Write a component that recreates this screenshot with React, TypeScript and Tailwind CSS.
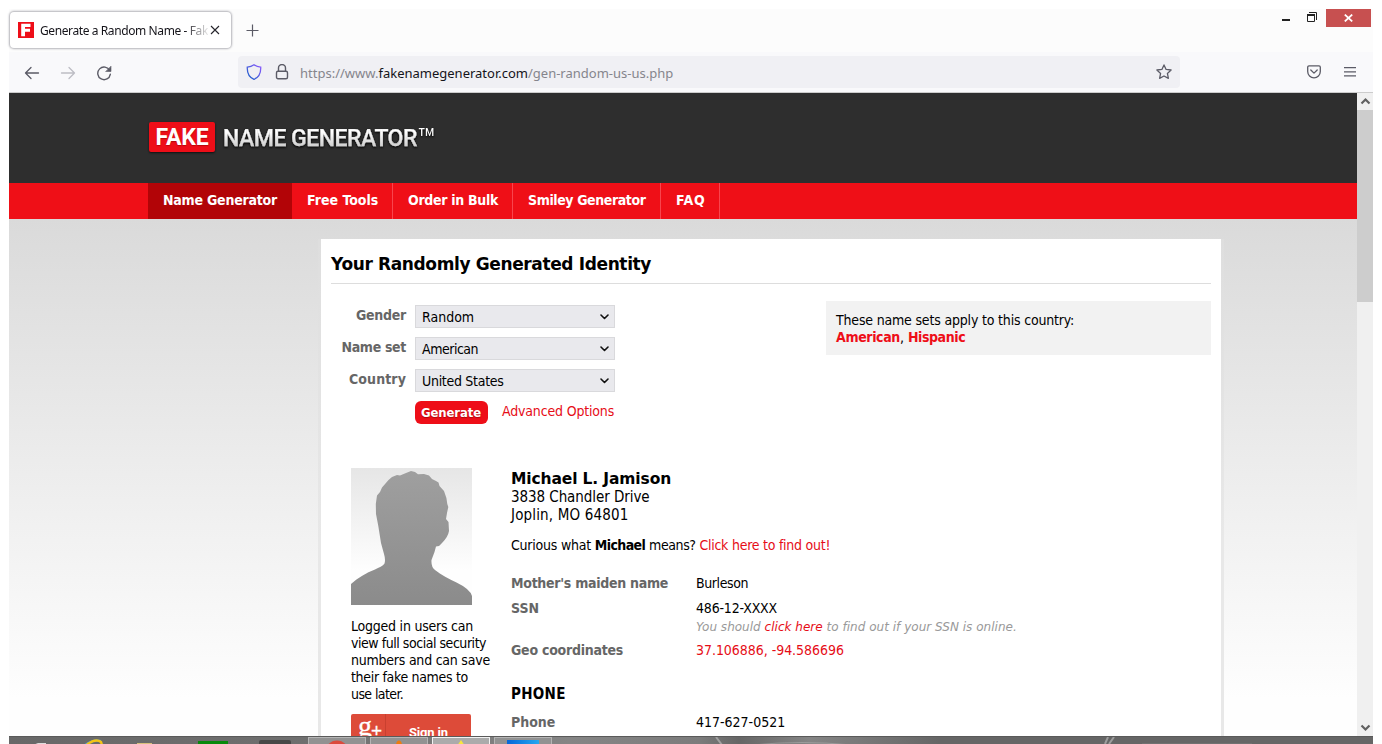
import type { ReactNode } from "react";

const nav = [
  { label: "Name Generator", cls: "w-[144px] bg-[#b20407] pl-[15px] tracking-[-0.22px]" },
  { label: "Free Tools", cls: "w-[101px] border-r border-[#f8454d] pl-[15px]" },
  { label: "Order in Bulk", cls: "w-[120px] border-r border-[#f8454d] pl-[15px] tracking-[-0.3px]" },
  { label: "Smiley Generator", cls: "w-[148px] border-r border-[#f8454d] pl-[15px] tracking-[-0.4px]" },
  { label: "FAQ", cls: "w-[59px] border-r border-[#f8454d] pl-[15px] tracking-[0.6px]" },
];

const fields = [
  { label: "Gender", labelCls: "tracking-[-0.25px]", value: "Random", valueCls: "" },
  { label: "Name set", labelCls: "tracking-[-0.33px]", value: "American", valueCls: "tracking-[-0.48px]" },
  { label: "Country", labelCls: "tracking-[0.1px]", value: "United States", valueCls: "tracking-[-0.29px]" },
];

function TitleBar() {
  return (
    <div className="flex h-[43px] bg-[#fcfcfc] pl-px">
      <div className="mt-[3px] flex h-[36px] w-[221px] items-center rounded-[4px] bg-white pl-[8px] shadow-[0_0_2px_1px_rgba(90,90,105,0.45)]">
        <svg className="size-4 shrink-0" viewBox="0 0 16 16">
          <rect width="16" height="16" fill="#ee0e18" />
          <path d="M3.2 1.8h9.3v3.2H7v1.8h5v3H7v4.5H3.2z" fill="#fff" />
        </svg>
        <div className="ml-[6px] w-[168px] overflow-hidden whitespace-nowrap bg-[linear-gradient(90deg,#15141a_144px,#15141a11_169px)] bg-clip-text pt-[2px] font-['Noto_Sans',sans-serif] text-[12px] tracking-[-0.4px] text-transparent">
          Generate a Random Name - Fake
        </div>
        <svg className="ml-[2px] size-[10px]" viewBox="0 0 10 10" fill="none" stroke="#25242b" strokeWidth="1.1">
          <path d="M1 1l8 8M9 1L1 9" />
        </svg>
      </div>
      <svg className="ml-[15px] mt-[15px] size-[13px]" viewBox="0 0 13 13" fill="none" stroke="#5b5b66" strokeWidth="1.2">
        <path d="M6.5 .5v12M.5 6.5h12" />
      </svg>
      <div className="ml-auto flex">
        <svg className="mr-[8px] h-[18px] w-[36px]" viewBox="0 0 36 18" fill="none" stroke="#222">
          <path d="M0 11h8" strokeWidth="2" />
          <path d="M25.5 6v6.500h7v-6.500z" strokeWidth="1" />
          <path d="M25 6h8" strokeWidth="2" />
          <path d="M27 3.500h7.500v7.500" strokeWidth="1" />
        </svg>
        <div className="mr-[2px] flex h-[18px] w-[45px] items-center justify-center bg-[#c75050]">
          <svg className="h-[8px] w-[9px]" viewBox="0 0 9 8" fill="none" stroke="#fff" strokeWidth="1.8">
            <path d="M.8.6l7.400 6.800M8.200.6L.8 7.400" />
          </svg>
        </div>
      </div>
    </div>
  );
}

function Toolbar() {
  return (
    <div className="flex h-[41px] items-center border-b border-[#cccccc] bg-[#f9f9fb]">
      <svg className="ml-[15px] mt-px h-[16px] w-[90px]" viewBox="0 0 90 16" fill="none" strokeWidth="1.3" strokeLinecap="round" strokeLinejoin="round">
        <path d="M14.500 8H1.500M7 2.500L1.500 8 7 13.500" stroke="#5b5b66" />
        <path d="M37.500 8h13M45 2.500L50.500 8 45 13.500" stroke="#bdbdc4" />
        <path d="M85.700 5.500A6.300 6.300 0 1 0 86.300 9.300" stroke="#5b5b66" strokeWidth="1.4" />
        <path d="M87 1.500v5h-5z" fill="#5b5b66" stroke="#5b5b66" strokeWidth=".6" />
      </svg>
      <div className="ml-[124px] flex h-[32px] w-[942px] items-center rounded-[4px] bg-[#f0f0f4] pl-[8px] pr-[8px]">
        <svg className="size-4" viewBox="0 0 16 16" fill="none" strokeWidth="1.3">
          <defs>
            <linearGradient id="shield" x1="0" y1="1" x2="1" y2="0">
              <stop offset="0.2" stopColor="#2c5fd0" />
              <stop offset="1" stopColor="#9059ff" />
            </linearGradient>
          </defs>
          <path d="M8 .8C6 2.200 3.800 2.900 1.300 3.100 1 9 3.200 13.300 8 15.300 12.800 13.300 15 9 14.700 3.100 12.200 2.900 10 2.200 8 .8z" stroke="url(#shield)" />
        </svg>
        <svg className="ml-[13px] h-[16px] w-[14px]" viewBox="0 0 14 16" fill="none" stroke="#5b5b66" strokeWidth="1.4">
          <rect x="1.500" y="7.200" width="11" height="7.600" rx="1.500" />
          <path d="M3.500 7V4a3.500 3.500 0 0 1 7 0v3" />
        </svg>
        <div className="ml-[11px] mt-[2px] whitespace-nowrap font-['Noto_Sans',sans-serif] text-[13px] leading-[18px] text-[#85858c]">
          https://www.<span className="text-[#15141a]">fakenamegenerator.com</span>/gen-random-us-us.php
        </div>
        <svg className="ml-auto size-4" viewBox="0 0 16 16" fill="none" stroke="#5b5b66" strokeWidth="1.300" strokeLinejoin="round">
          <path d="M8 .9l2.100 4.500 5 .6-3.700 3.400 1 4.900L8 12l-4.400 2.300 1-4.900L.9 6l5-.6z" />
        </svg>
      </div>
      <svg className="ml-auto h-[14px] w-[14px]" viewBox="0 0 14 14" fill="none" stroke="#5b5b66" strokeWidth="1.300" strokeLinecap="round" strokeLinejoin="round">
        <path d="M2 .9h10a1.300 1.300 0 0 1 1.300 1.300v4.300a6.300 6.300 0 0 1-12.600 0V2.200A1.300 1.300 0 0 1 2 .9z" />
        <path d="M3.800 5L7 8.100 10.200 5" />
      </svg>
      <svg className="ml-[23px] mr-[17px] h-[10px] w-[12px]" viewBox="0 0 12 10" stroke="#5b5b66" strokeWidth="1.200">
        <path d="M0 .7h12M0 4.800h12M0 8.900h12" />
      </svg>
    </div>
  );
}

function Avatar() {
  return (
    <svg className="block h-[137px] w-[121px]" viewBox="0 0 121 137">
      <defs>
        <linearGradient id="avatarBg" x1="0" y1="0" x2="0" y2="1">
          <stop offset="0" stopColor="#e6e6e6" />
          <stop offset="0.75" stopColor="#fefefe" />
        </linearGradient>
        <linearGradient id="avatarFg" x1="0" y1="0" x2="0" y2="1">
          <stop offset="0" stopColor="#9f9f9f" />
          <stop offset="1" stopColor="#8b8b8b" />
        </linearGradient>
      </defs>
      <rect width="121" height="137" fill="url(#avatarBg)" />
      <path
        fill="url(#avatarFg)"
        d="M0 116C7 109.500 15 105 24 101.500 28 99.500 32 98 33.500 95.500 34.400 93 34 89 33 86L30 75 27.300 58 25 46 24.800 36 26 27.500 29 24 31 19.500 37.500 12 41 9 46 7 49 7.500 55 5 60 3 64 4 67 6.200 73 6 78 7.500 81 11 85 13 87.500 14.500 88.500 18 93 23Q96 30 96.300 36L97.300 39 96 45 95 51 97.500 54 98 63Q97 69 91 75L88 78 85 78.500 83.500 84 80.500 92Q80 99 84 102C90 107 98 111 105.500 114.500Q119 121 121 128V137H0z"
      />
    </svg>
  );
}

function Row({ label, labelCls, className, children }: { label: string; labelCls: string; className: string; children: ReactNode }) {
  return (
    <div className={"flex leading-[17px] " + className}>
      <div className={"w-[185px] font-bold text-[#666] " + labelCls}>{label}</div>
      <div>{children}</div>
    </div>
  );
}

function Profile() {
  return (
    <div className="flex pl-[20px]">
      <div className="w-[160px] shrink-0">
        <Avatar />
        <div className="mt-[13px] whitespace-nowrap leading-[17px]">
          <div className="tracking-[-0.23px]">Logged in users can</div>
          <div className="tracking-[-0.46px]">view full social security</div>
          <div className="tracking-[-0.23px]">numbers and can save</div>
          <div className="tracking-[-0.32px]">their fake names to</div>
          <div className="tracking-[-0.6px]">use later.</div>
        </div>
        <div className="mt-[11px] flex h-[34px] w-[120px] rounded-[2px] bg-[#dd4b39] text-white">
          <div className="flex w-[35px] border-r border-[#c9402f] pl-[7px] font-['Liberation_Serif',serif] text-[28px] leading-[24px] tracking-[-1px] [-webkit-text-stroke:0.3px_white]">
            g<span className="font-['Liberation_Sans',sans-serif] text-[19px] leading-[33px]">+</span>
          </div>
          <div className="pl-[23px] font-['Roboto',sans-serif] text-[13px] font-bold leading-[37px] tracking-[-0.2px]">Sign in</div>
        </div>
      </div>
      <div className="whitespace-nowrap pt-px">
        <div className="pt-px font-['DejaVu_Sans',sans-serif] text-[15.5px] font-bold leading-[18px] tracking-[-0.13px]">Michael L. Jamison</div>
        <div className="text-[15px] leading-[18px] tracking-[-0.07px]">3838 Chandler Drive</div>
        <div className="text-[15px] leading-[18px] tracking-[0.16px]">Joplin, MO 64801</div>
        <div className="mt-[13px] leading-[17px] tracking-[-0.22px]">
          Curious what <b className="tracking-[-0.6px]">Michael</b> <span className="tracking-[-0.4px]">means?</span>{" "}
          <a className="tracking-[-0.25px] text-[#e60d17]">Click here to find out!</a>
        </div>
        <Row label="Mother's maiden name" labelCls="tracking-[-0.28px]" className="mt-[21px] h-[25px]">
          <span className="tracking-[-0.4px]">Burleson</span>
        </Row>
        <Row label="SSN" labelCls="" className="h-[42px]">
          <div className="tracking-[-0.18px]">486-12-XXXX</div>
          <div className="mt-[2px] font-['DejaVu_Sans',sans-serif] text-[12px] italic tracking-[0.02px] text-[#999]">
            You should <a className="text-[#e60d17]">click here</a> to find out if your SSN is online.
          </div>
        </Row>
        <Row label="Geo coordinates" labelCls="tracking-[-0.25px]" className="h-[44px]">
          <a className="tracking-[-0.04px] text-[#e60d17]">37.106886, -94.586696</a>
        </Row>
        <div className="text-[15px] font-bold leading-[17px] tracking-[0.3px]">PHONE</div>
        <Row label="Phone" labelCls="" className="mt-[11px]">
          417-627-0521
        </Row>
      </div>
    </div>
  );
}

function Taskbar() {
  return (
    <div className="flex h-[8px] overflow-hidden border-t border-[#5a5a5a] bg-[linear-gradient(90deg,#686868_0px,#6f6f6f_300px,#858585_560px,#7c7c7c_690px,#666_730px,#858585_800px,#777_860px,#666_930px)]">
      <svg className="h-[8px] w-[299px] shrink-0" viewBox="0 0 299 8" fill="none">
        <path d="M24 8l5-2h8v2z" fill="#ddd" />
        <path d="M76 8q8-6 16-4" stroke="#4aa3da" strokeWidth="2" />
        <path d="M78 7.500q9-6.500 14-2.500l1 3" stroke="#f4c414" strokeWidth="2.400" />
        <path d="M128 6h15v2h-15z" fill="#d8c07c" />
        <path d="M189 4h30v4h-30z" fill="#088a0c" />
        <rect x="250" y="3" width="32" height="8" rx="2" fill="#484848" />
      </svg>
      <div className="flex shrink-0 gap-[4px]">
        <div className="h-[10px] w-[58px] border border-[#b5b5b5] bg-[#929292]">
          <svg className="h-[8px] w-[56px]" viewBox="0 0 56 8"><circle cx="28" cy="14" r="11.500" fill="#dc4a3d" /></svg>
        </div>
        <div className="h-[10px] w-[58px] border border-[#b5b5b5] bg-[#929292]">
          <svg className="h-[8px] w-[56px]" viewBox="0 0 56 8"><path d="M25 8q0-5.500 3-5.500t3 5.500z" fill="#ed7c10" /></svg>
        </div>
        <div className="h-[10px] w-[58px] border border-[#f2f2f2] bg-[#ababab]">
          <svg className="h-[8px] w-[56px]" viewBox="0 0 56 8"><path d="M24 8l4-6 4 6z" fill="#f8e63d" /></svg>
        </div>
        <div className="h-[10px] w-[58px] border border-[#b5b5b5] bg-[#929292] pl-[12px] pt-[2px]">
          <div className="h-[6px] w-[32px] bg-linear-to-r from-[#0866d8] to-[#28a8ef]" />
        </div>
      </div>
      <svg className="h-[8px] w-[820px] shrink-0" viewBox="0 0 820 8" fill="none" stroke="#c2c2c2">
        <path d="M164 0l6 8M553 7l3-7M557 7l5-7" strokeWidth="2" opacity=".6" />
        <path d="M200 8q50-5 100 0" opacity=".4" />
        <path d="M590 7h110" opacity=".25" />
      </svg>
    </div>
  );
}

export default function App() {
  return (
    <div className="h-[744px] w-[1382px] overflow-hidden bg-white pl-[9px] pt-[9px]">
      <div className="flex h-[735px] w-[1364px] flex-col font-['DejaVu_Sans_Condensed','DejaVu_Sans',sans-serif] text-[14px] text-black">
        <TitleBar />
        <Toolbar />
        <div className="flex h-[643px] overflow-hidden">
          <div className="flex w-[1348px] flex-col">
            <header className="flex h-[90px] shrink-0 bg-[#2e2e2e] pl-[140px] pt-[29px] font-['Roboto',sans-serif] text-white">
              <div className="flex h-[30px] w-[66px] items-center justify-center rounded-[2px] bg-[#ee0e18] pt-[3px] text-[23px] font-bold tracking-[-0.2px] shadow-[0_1px_2px_#111] [text-shadow:0_1px_1px_#8008]">FAKE</div>
              <div className="ml-[8px] flex h-[33px] whitespace-nowrap bg-linear-to-b from-white from-30% to-[#c8c8c8] to-80% bg-clip-text text-[23px] font-medium leading-[33px] tracking-[-0.5px] text-transparent drop-shadow-[0_1px_1px_#000] [-webkit-text-stroke:0.25px_#e2e2e2]">
                <span>NAME GENERATOR</span>
                <span className="text-[31px] font-normal leading-[36px] [-webkit-text-stroke:0]">™</span>
              </div>
            </header>
            <nav className="flex h-[36px] shrink-0 bg-[#ef0f17] pl-[139px] text-white">
              {nav.map((n) => (
                <div key={n.label} className={"whitespace-nowrap font-bold leading-[34px] " + n.cls}>{n.label}</div>
              ))}
            </nav>
            <div className="h-[517px] bg-linear-to-b from-[#dadada] to-[#fefefe] to-[480px] pl-[309px] pt-[20px]">
              <div className="h-full w-[906px] bg-linear-to-b from-[#dedede] to-[#e8e8e8] to-[300px] px-[3px]">
                <main className="h-full bg-white px-[10px]">
                  <h1 className="h-[45px] whitespace-nowrap border-b border-[#ddd] pt-[15px] font-['DejaVu_Sans',sans-serif] text-[17px] font-bold leading-[21px] tracking-[-0.37px]">
                    Your Randomly Generated Identity
                  </h1>
                  <section className="flex h-[184px] justify-between pt-[17px]">
                    <div className="pt-[4px]">
                      {fields.map((f) => (
                        <div key={f.label} className="flex h-[32px] gap-[9px]">
                          <div className={"w-[75px] pt-[2px] text-right font-bold leading-[17px] text-[#666] " + f.labelCls}>{f.label}</div>
                          <div className="flex h-[23px] w-[200px] items-center justify-between border border-[#d9d9dc] bg-[#e9e9ed] pl-[6px] pr-[5px]">
                            <span className={"pt-[2px] " + f.valueCls}>{f.value}</span>
                            <svg className="mt-px h-[6px] w-[9px]" viewBox="0 0 9 6" fill="none" stroke="#111" strokeWidth="1.600" strokeLinecap="round" strokeLinejoin="round">
                              <path d="M1 1l3.500 3.500L8 1" />
                            </svg>
                          </div>
                        </div>
                      ))}
                      <div className="flex pl-[84px]">
                        <button className="h-[23px] w-[73px] rounded-[6px] bg-[#ee0e18] pr-px text-[13px] font-bold leading-[23px] tracking-[-0.1px] text-white [text-shadow:0_1px_1px_#7008]">
                          Generate
                        </button>
                        <a className="ml-[14px] mt-[2px] leading-[17px] tracking-[-0.17px] text-[#e60d17]">Advanced Options</a>
                      </div>
                    </div>
                    <div className="h-[54px] w-[385px] bg-[#f2f2f2] pl-[10px] pt-[11px] leading-[17px]">
                      <div className="tracking-[-0.18px]">These name sets apply to this country:</div>
                      <div>
                        <b className="tracking-[-0.37px] text-[#ee0e18]">American</b>, <b className="tracking-[-0.42px] text-[#ee0e18]">Hispanic</b>
                      </div>
                    </div>
                  </section>
                  <Profile />
                </main>
              </div>
            </div>
          </div>
          <div className="flex w-[16px] flex-col items-center bg-[#f0f0f0]">
            <svg className="h-[17px] w-[16px] shrink-0" viewBox="0 0 16 17" fill="none" stroke="#606060" strokeWidth="2.200">
              <path d="M4.500 10.500l4-4 4 4" />
            </svg>
            <div className="h-[192px] w-[16px] bg-[#cdcdcd]" />
            <svg className="mt-auto h-[17px] w-[16px] shrink-0" viewBox="0 0 16 17" fill="none" stroke="#606060" strokeWidth="2.200">
              <path d="M4.500 6.500l4 4 4-4" />
            </svg>
          </div>
        </div>
        <Taskbar />
      </div>
    </div>
  );
}
